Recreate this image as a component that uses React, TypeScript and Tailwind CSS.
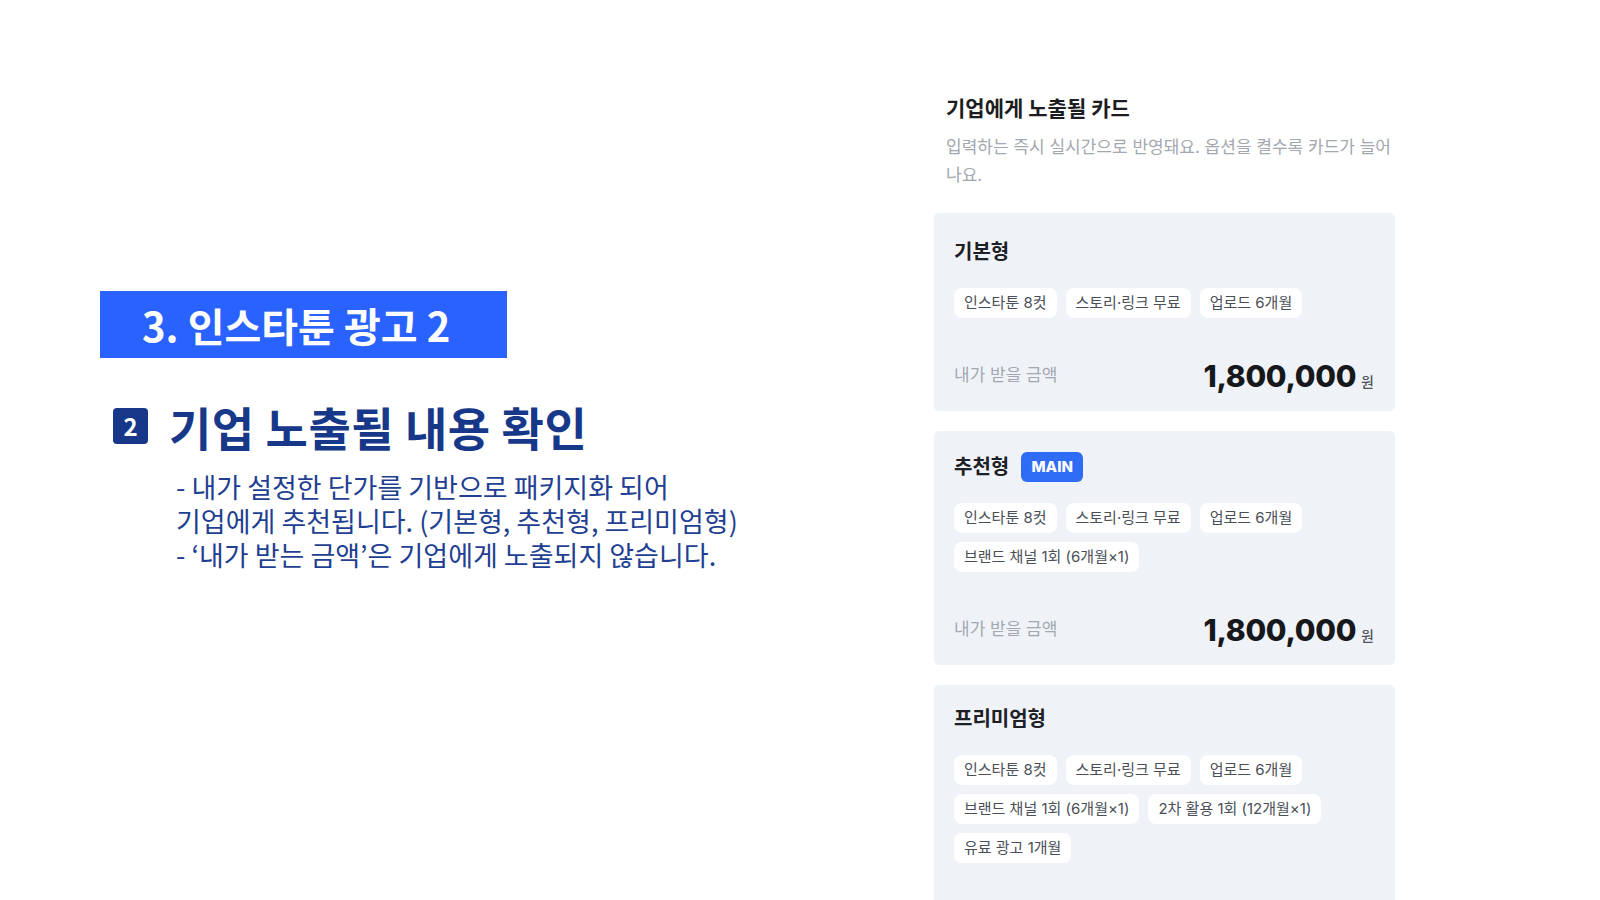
import React from "react";

type Plan = {
  name: string;
  main?: boolean;
  items: string[];
  amount?: string;
  pt: string;
};

const plans: Plan[] = [
  {
    name: "기본형",
    items: ["인스타툰 8컷", "스토리·링크 무료", "업로드 6개월"],
    amount: "1,800,000",
    pt: "pt-[24px]",
  },
  {
    name: "추천형",
    main: true,
    items: ["인스타툰 8컷", "스토리·링크 무료", "업로드 6개월", "브랜드 채널 1회 (6개월×1)"],
    amount: "1,800,000",
    pt: "pt-[21px]",
  },
  {
    // bottom of this card runs off the page, price row not visible
    name: "프리미엄형",
    items: [
      "인스타툰 8컷",
      "스토리·링크 무료",
      "업로드 6개월",
      "브랜드 채널 1회 (6개월×1)",
      "2차 활용 1회 (12개월×1)",
      "유료 광고 1개월",
    ],
    pt: "pt-[19px]",
  },
];

function PlanCard({ plan }: { plan: Plan }) {
  return (
    <div className={`w-[461px] rounded-[5px] bg-[#eff3f8] px-[20px] pb-[17px] ${plan.pt}`}>
      <div className="flex h-[30px] items-center gap-[12px]">
        <h4 className="text-[20px] font-bold leading-[30px] text-[#1d2024]">{plan.name}</h4>
        {plan.main && (
          <span className="flex h-[30px] w-[62px] items-center justify-center rounded-[6px] bg-[#2f6cf6] text-[15px] font-extrabold text-white">
            MAIN
          </span>
        )}
      </div>
      <div className="mt-[21px] flex flex-wrap gap-[9px]">
        {plan.items.map((it) => (
          <span
            key={it}
            className="flex h-[30px] items-center rounded-[8px] bg-white px-[10px] text-[15px] text-[#4a4f57]"
          >
            {it}
          </span>
        ))}
      </div>
      {plan.amount ? (
        <div className="mt-[40px] flex h-[36px] items-center justify-between">
          <span className="text-[17px] text-[#a3a8b0]">내가 받을 금액</span>
          <div className="flex items-baseline pr-[1px]">
            <span className="text-[30px] font-extrabold tracking-[-0.3px] text-[#16181b]">{plan.amount}</span>
            <span className="ml-[5px] text-[14px] font-medium text-[#51565e]">원</span>
          </div>
        </div>
      ) : (
        <div className="h-[60px]" />
      )}
    </div>
  );
}

export default function App() {
  return (
    <div className="relative flex h-[900px] w-[1600px] overflow-hidden bg-white">
      {/* left: slide text */}
      <div className="w-[834px] shrink-0 pl-[100px] pt-[291px] font-['Noto_Sans_CJK_KR',sans-serif]">
        <div className="flex h-[67px] w-[407px] items-center bg-[#2962ff] pl-[42px] text-[40px] font-bold text-white">
          3. 인스타툰 광고 2
        </div>
        <div className="mt-[40px] flex h-[56px] items-center">
          <div className="ml-[13px] flex h-[36px] w-[35px] items-center justify-center rounded-[4px] bg-[#173889] text-[24px] font-bold text-white">
            2
          </div>
          <h2 className="ml-[21px] text-[46px] font-bold tracking-[0.5px] text-[#173889]">기업 노출될 내용 확인</h2>
        </div>
        <p className="mt-[16px] pl-[76px] text-[27px] leading-[34px] text-[#1f3f92]">
          - 내가 설정한 단가를 기반으로 패키지화 되어
          <br />
          기업에게 추천됩니다. (기본형, 추천형, 프리미엄형)
          <br />- ‘내가 받는 금액’은 기업에게 노출되지 않습니다.
        </p>
      </div>

      {/* right: card preview */}
      <div className="ml-[100px] w-[462px] shrink-0 pt-[95px] font-['Inter','Noto_Sans_CJK_KR',sans-serif]">
        <h3 className="pl-[12px] text-[21px] font-bold leading-[28px] text-[#1b1d21]">기업에게 노출될 카드</h3>
        <p className="mt-[10px] w-[464px] pl-[12px] text-[17px] leading-[28px] text-[#a3a7ae]">
          입력하는 즉시 실시간으로 반영돼요. 옵션을 켤수록 카드가 늘어나요.
        </p>
        <div className="mt-[24px] flex flex-col gap-[20px]">
          {plans.map((p) => (
            <PlanCard key={p.name} plan={p} />
          ))}
        </div>
      </div>
    </div>
  );
}
